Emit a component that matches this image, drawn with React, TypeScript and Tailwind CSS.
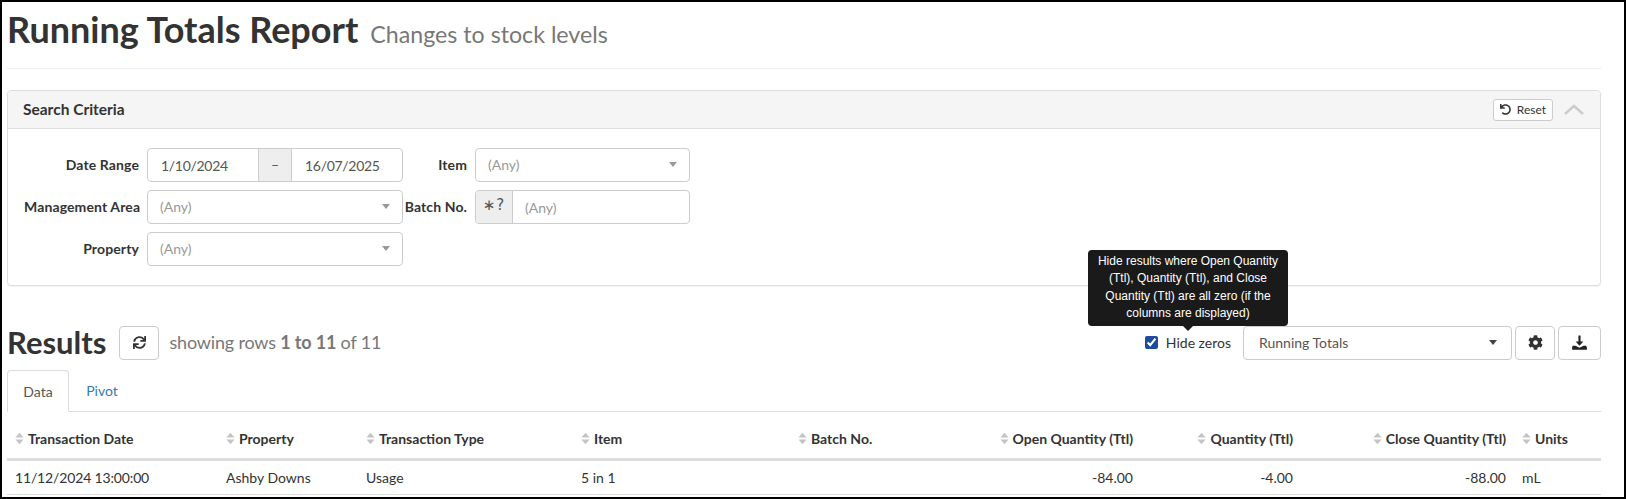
import { FaCog, FaSync, FaUndo } from 'react-icons/fa';

const fieldBorder = 'border border-[#ccc] rounded-[4px] bg-white';
const labelCls = 'text-right font-bold pr-2 pb-[2px] whitespace-nowrap tracking-[0.12px]';

function Caret({ dark }: { dark?: boolean }) {
  return (
    <span
      className={`w-0 h-0 border-x-[4px] border-x-transparent border-t-[5px] ${dark ? 'border-t-[#444]' : 'border-t-[#999]'}`}
    />
  );
}

function AnySelect() {
  return (
    <div className={`${fieldBorder} h-[34px] flex items-center justify-between px-3 pb-[2px] text-[14px] text-[#999]`}>
      <span>(Any)</span>
      <Caret />
    </div>
  );
}

function SortIcon() {
  return (
    <svg viewBox="0 0 10 14" className="w-[9px] h-[13px] shrink-0 mr-[4px]" fill="#c4c4c4">
      <path d="M5 0.5 L9.5 6 L0.5 6 Z" />
      <path d="M5 13.5 L9.5 8 L0.5 8 Z" />
    </svg>
  );
}

const columns = [
  { label: 'Transaction Date', width: 'w-[211px]' },
  { label: 'Property', width: 'w-[140px]' },
  { label: 'Transaction Type', width: 'w-[215px]' },
  { label: 'Item', width: 'w-[217px]' },
  { label: 'Batch No.', width: 'w-[169px]' },
  { label: 'Open Quantity (Ttl)', width: 'w-[182px]', right: true },
  { label: 'Quantity (Ttl)', width: 'w-[160px]', right: true },
  { label: 'Close Quantity (Ttl)', width: 'w-[213px]', right: true },
  { label: 'Units', width: 'w-[87px]' },
];

const row = ['11/12/2024 13:00:00', 'Ashby Downs', 'Usage', '5 in 1', '', '-84.00', '-4.00', '-88.00', 'mL'];

export default function App() {
  return (
    <div className="h-[499px] border-2 border-black overflow-hidden bg-white pl-[5px] pr-[23px] font-['Lato',sans-serif] text-[14px] text-[#333]">
      <div className="h-[67px] border-b border-[#eee] flex items-baseline">
        <h1 className="text-[36px] font-bold leading-[54px] text-[#333]">Running Totals Report</h1>
        <span className="ml-[12px] text-[23.2px] text-[#777]">Changes to stock levels</span>
      </div>

      <div className="mt-[21px] h-[196px] border border-[#ddd] rounded-[4px] shadow-[0_1px_1px_rgba(0,0,0,0.05)]">
        <div className="h-[38px] bg-[#f5f5f5] border-b border-[#ddd] flex items-center justify-between pl-[15px] pr-[16px] rounded-t-[4px]">
          <span className="text-[15.5px] font-bold">Search Criteria</span>
          <div className="flex items-center gap-[11px]">
            <button className="h-[22px] w-[60px] border border-[#ccc] rounded-[3px] bg-white flex items-center justify-center gap-[6px] text-[12px]">
              <FaUndo className="w-[11px] h-[11px]" />
              Reset
            </button>
            <svg viewBox="0 0 20 11" className="w-[20px] h-[11px]" fill="none" stroke="#ccc" strokeWidth="2.5">
              <path d="M1 10 L10 2 L19 10" />
            </svg>
          </div>
        </div>
        <div className="grid grid-cols-[123px_256px_72px_215px] auto-rows-[34px] gap-y-2 pl-[16px] pt-[19px] items-center">
          <label className={labelCls}>Date Range</label>
          <div className={`${fieldBorder} h-[34px] flex items-stretch text-[#555] tracking-[-0.3px]`}>
            <div className="w-[110px] flex items-center pl-[13px]">1/10/2024</div>
            <div className="w-[34px] flex items-center justify-center bg-[#eee] border-x border-[#ccc] pb-[2px]">–</div>
            <div className="flex-1 flex items-center pl-[13px]">16/07/2025</div>
          </div>
          <label className={labelCls}>Item</label>
          <AnySelect />

          <label className={labelCls}>Management Area</label>
          <AnySelect />
          <label className={labelCls}>Batch No.</label>
          <div className={`${fieldBorder} h-[34px] flex items-stretch`}>
            <div className="w-[37px] flex items-center justify-center bg-[#eee] border-r border-[#ccc] rounded-l-[4px] text-[#555] text-[15px] pb-[3px] tracking-[1px] font-['DejaVu_Sans',sans-serif]">∗?</div>
            <div className="flex-1 flex items-center pl-3 text-[#999]">(Any)</div>
          </div>

          <label className={labelCls}>Property</label>
          <AnySelect />
        </div>
      </div>

      <div className="relative mt-[39px] h-[35px] flex items-center justify-between">
        <div className="flex items-center">
          <h2 className="text-[31px] font-bold">Results</h2>
          <button className="ml-[13px] w-[40px] h-[34px] border border-[#ccc] rounded-[4px] flex items-center justify-center">
            <FaSync className="w-[13px] h-[13px]" />
          </button>
          <span className="ml-[10px] text-[18px] text-[#777] tracking-[-0.17px]">
            showing rows <b>1 to 11</b> of 11
          </span>
        </div>
        <div className="flex items-center">
          <input type="checkbox" defaultChecked className="w-[13px] h-[13px] accent-[#1e4aa0]" />
          <span className="ml-[8px] mr-[12px]">Hide zeros</span>
          <div className={`${fieldBorder} w-[269px] h-[34px] flex items-center justify-between pl-[15px] pr-[14px] text-[#555]`}>
            Running Totals
            <Caret dark />
          </div>
          <button className="ml-[3px] w-[40px] h-[34px] border border-[#ccc] rounded-[4px] flex items-center justify-center">
            <FaCog className="w-[15px] h-[15px]" />
          </button>
          <button className="ml-[3px] w-[43px] h-[34px] border border-[#ccc] rounded-[4px] flex items-center justify-center">
            <svg viewBox="0 0 14 14" className="w-[15px] h-[15px]" fill="#222">
              <path d="M6 0.5h2v5.5h2.6L7 10 3.4 6H6z" />
              <path d="M0.6 10 H3.2 L7 11.8 L10.8 10 H13.2 Q14 11.5 14 13 Q14 13.8 13 13.8 H1 Q0 13.8 0 13 Q0 11.5 0.6 10z" />
            </svg>
          </button>
        </div>
        <div className="absolute left-[1081px] bottom-[34px] w-[200px] h-[76px] bg-[#1a1a1a] rounded-[4px] text-white text-[12px] leading-[17.4px] text-center font-['Liberation_Sans',sans-serif] px-2 py-[3px]">
          Hide results where Open Quantity (Ttl), Quantity (Ttl), and Close Quantity (Ttl) are all zero (if the columns are displayed)
          <span className="absolute left-1/2 -translate-x-1/2 top-full w-0 h-0 border-x-[5px] border-x-transparent border-t-[5px] border-t-[#1a1a1a]" />
        </div>
      </div>

      <div className="mt-[10px] h-[42px] border-b border-[#ddd] flex">
        <div className="w-[62px] h-[42px] border border-[#ddd] border-b-white rounded-t-[4px] flex items-center justify-center text-[#555]">Data</div>
        <div className="w-[66px] h-[41px] flex items-center justify-center text-[#337ab7]">Pivot</div>
      </div>

      <table className="table-fixed w-[1594px] mt-[8px] border-collapse">
        <thead>
          <tr className="border-b-[3px] border-[#ddd]">
            {columns.map((c) => (
              <th key={c.label} className={`${c.width} h-[39px] px-2 font-bold`}>
                <div className={`flex items-center ${c.right ? 'justify-end' : ''}`}>
                  <SortIcon />
                  {c.label}
                </div>
              </th>
            ))}
          </tr>
        </thead>
        <tbody>
          <tr className="border-b border-[#ddd]">
            {row.map((v, i) => (
              <td key={i} className={`h-[35px] px-2 ${columns[i].right ? 'text-right' : ''} ${i === 0 ? 'tracking-[-0.15px]' : ''}`}>{v}</td>
            ))}
          </tr>
        </tbody>
      </table>
    </div>
  );
}
